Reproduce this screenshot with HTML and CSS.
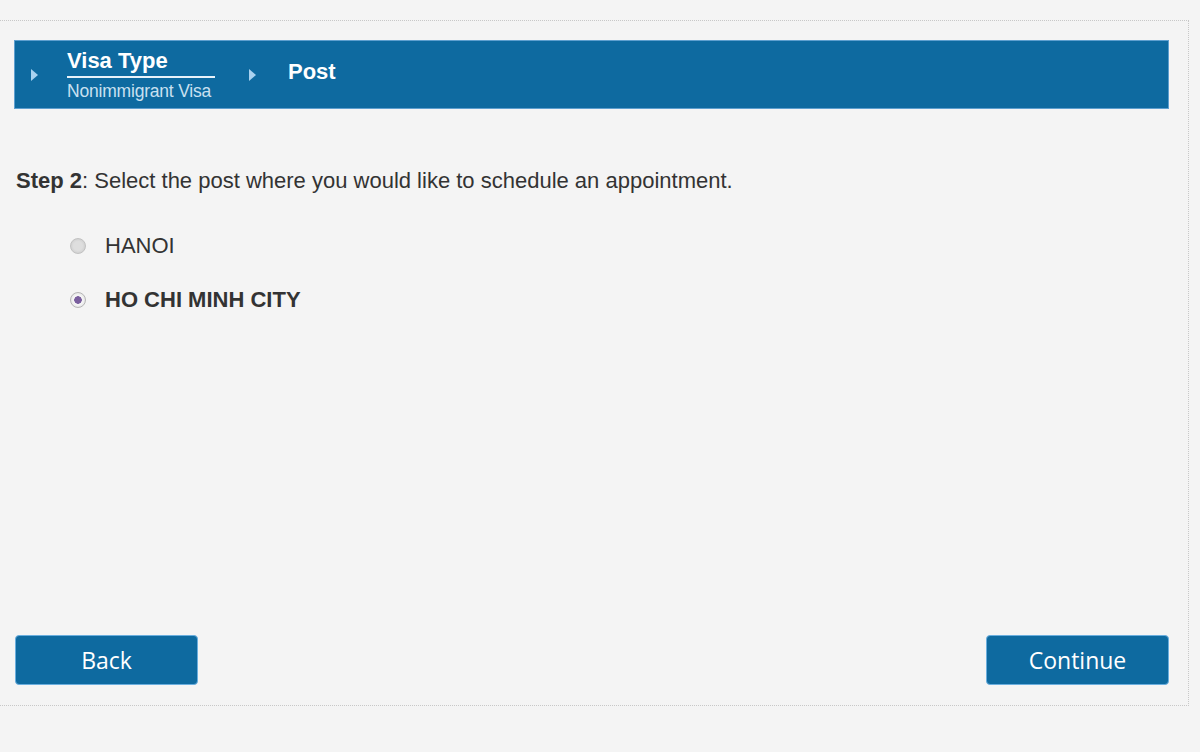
FILE: index.html
```html
<!DOCTYPE html>
<html>
<head>
<meta charset="utf-8">
<link rel="stylesheet" href="styles.css">
</head>
<body>
<div class="page">
  <div class="steps">
    <div class="step">
      <span class="arrow"></span>
      <div class="step-text">
        <div class="step-title underlined">Visa Type</div>
        <div class="step-sub">Nonimmigrant Visa</div>
      </div>
    </div>
    <div class="step">
      <span class="arrow"></span>
      <div class="step-text current">
        <div class="step-title">Post</div>
      </div>
    </div>
  </div>
  <p class="instr"><b>Step 2</b>: Select the post where you would like to schedule an appointment.</p>
  <div class="options">
    <label class="opt"><span class="radio"></span><span>HANOI</span></label>
    <label class="opt selected"><span class="radio"></span><span>HO CHI MINH CITY</span></label>
  </div>
  <div class="actions">
    <button class="btn">Back</button>
    <button class="btn">Continue</button>
  </div>
</div>
</body>
</html>
```
FILE: styles.css
```css
html, body { margin: 0; padding: 0; background: #f4f4f4; }
body { font-family: "Liberation Sans", Arial, sans-serif; color: #333; height: 752px; overflow: hidden; }
.page {
  margin-top: 20px;
  width: 1155px;
  height: 645px;
  border: 1px dotted #c8c8c8;
  border-left: none;
  padding: 19px 19px 20px 14px;
  box-sizing: content-box;
  display: flex;
  flex-direction: column;
}
.steps {
  background: #0e6aa0;
  border: 1px solid #5e9fcf;
  height: 67px;
  display: flex;
  align-items: center;
  padding-left: 16px;
}
.step { display: flex; align-items: center; margin-right: 34px; }
.arrow {
  width: 0; height: 0;
  border-top: 6px solid transparent;
  border-bottom: 6px solid transparent;
  border-left: 7px solid #a9d2f0;
  margin-right: 29px;
}
.step + .step .arrow { margin-right: 32px; }
.step-text { display: flex; flex-direction: column; color: #fff; }
.step-text.current { padding-bottom: 6px; }
.step-title { font-weight: bold; font-size: 22px; line-height: 24px; }
.step-title.underlined { border-bottom: 2px solid #e8f2fa; padding-bottom: 3px; width: 148px; }
.step-sub { font-size: 17.5px; color: #c9e0f0; line-height: 18px; margin-top: 4px; letter-spacing: -0.2px; }
.instr { margin: 59px 0 0 2px; font-size: 22px; line-height: 26px; }
.instr b { font-weight: bold; }
.options { display: flex; flex-direction: column; gap: 28px; margin-top: 39px; padding-left: 56px; }
.opt { display: flex; align-items: center; font-size: 22px; line-height: 26px; }
.opt.selected { font-weight: bold; }
.radio {
  width: 16px; height: 16px; border-radius: 50%;
  border: 1px solid #c2c2c2;
  background: radial-gradient(circle, #dedede 0 45%, #d0d0d0 75%, #e8e8e8 100%);
  margin-right: 19px;
  box-sizing: border-box;
  flex: none;
}
.opt.selected .radio {
  background: radial-gradient(circle, #7a5f9e 0 3.5px, #f4f4f4 4px 5px, #d6d6d6 100%);
  border-color: #b6b6b6;
}
.actions { margin-top: auto; display: flex; justify-content: space-between; padding-left: 1px; }
.btn {
  width: 183px; height: 50px;
  background: #0e6aa0;
  border: 1px solid #6aaede;
  border-radius: 4px;
  color: #fff;
  font-family: "Open Sans", sans-serif;
  font-size: 23px;
  padding: 0;
}
```
